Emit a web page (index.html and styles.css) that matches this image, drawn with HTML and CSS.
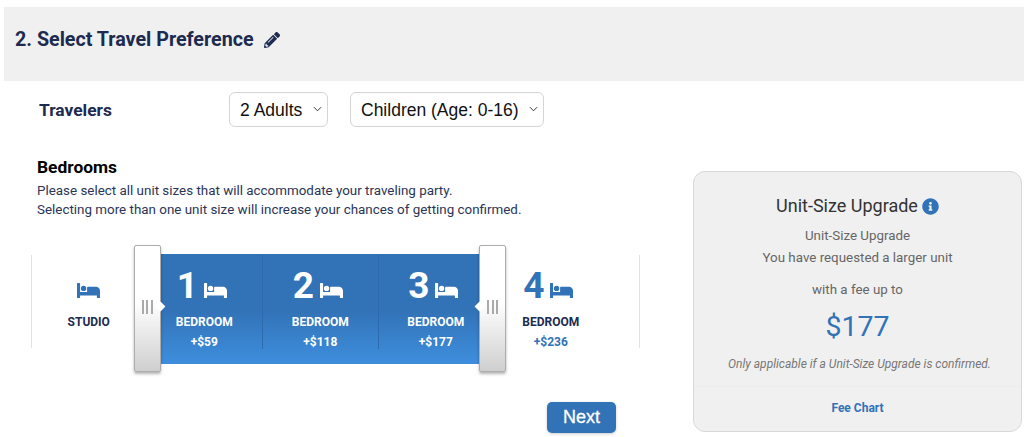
FILE: index.html
```html
<!DOCTYPE html>
<html lang="en">
<head>
<meta charset="utf-8">
<title>Select Travel Preference</title>
<link rel="stylesheet" href="styles.css">
</head>
<body>
<svg class="defs" width="0" height="0" aria-hidden="true">
  <symbol id="bed" viewBox="0 0 23 15"><path d="M.6 0h1.900c.3 0 .6.3.6.6V9h7V4.400c0-.4.3-.7.700-.7h8.200c2.200 0 4 1.800 4 4v6.700c0 .3-.3.600-.6.600h-1.900c-.3 0-.6-.3-.6-.6V12.500H3.100v1.900c0 .3-.3.600-.6.600H.6c-.3 0-.6-.3-.6-.6V.6C0 .3.300 0 .6 0zM6.600 2.700a2.700 2.700 0 1 1 0 5.400 2.700 2.700 0 0 1 0-5.400z"/></symbol>
</svg>
<header class="section-head">
  <h1>2. Select Travel Preference</h1>
  <svg class="pencil" viewBox="0 0 512 512"><path d="M497.9 142.1l-46.1 46.1c-4.7 4.7-12.3 4.7-17 0l-111-111c-4.7-4.7-4.7-12.3 0-17l46.1-46.1c18.7-18.7 49.1-18.7 67.9 0l60.1 60.1c18.8 18.7 18.8 49.1 0 67.9zM284.2 99.8L21.6 362.4.4 483.9c-2.9 16.4 11.4 30.6 27.8 27.8l121.5-21.3 262.6-262.6c4.7-4.7 4.7-12.3 0-17l-111-111c-4.8-4.7-12.4-4.7-17.1 0zM124.1 339.9c-5.5-5.5-5.5-14.3 0-19.8l154-154c5.5-5.5 14.3-5.5 19.8 0s5.5 14.3 0 19.8l-154 154c-5.5 5.5-14.3 5.5-19.8 0zM88 424h48v36.3l-64.5 11.3-31.1-31.1L51.7 376H88v48z"/></svg>
</header>
<div class="travelers">
  <div class="travelers-label">Travelers</div>
  <div class="select-wrap adults">
    <select><option>2 Adults</option></select>
    <svg class="chevron" viewBox="0 0 10 6"><path d="M1 1l4 4 4-4"/></svg>
  </div>
  <div class="select-wrap children">
    <select><option>Children (Age: 0-16)</option></select>
    <svg class="chevron" viewBox="0 0 10 6"><path d="M1 1l4 4 4-4"/></svg>
  </div>
</div>
<main class="content">
  <section class="left">
    <div class="intro">
      <h2>Bedrooms</h2>
      <p>Please select all unit sizes that will accommodate your traveling party.</p>
      <p>Selecting more than one unit size will increase your chances of getting confirmed.</p>
    </div>
    <div class="slider">
      <div class="band"></div>
      <div class="handle handle-left"><span class="grip"></span></div>
      <div class="handle handle-right"><span class="grip"></span></div>
      <div class="cell">
        <div class="top"><svg class="bed"><use href="#bed"/></svg></div>
        <div class="label">STUDIO</div>
      </div>
      <div class="cell selected">
        <div class="top"><span class="num">1</span><svg class="bed"><use href="#bed"/></svg></div>
        <div class="label">BEDROOM</div>
        <div class="price">+$59</div>
      </div>
      <div class="cell selected split">
        <div class="top"><span class="num">2</span><svg class="bed"><use href="#bed"/></svg></div>
        <div class="label">BEDROOM</div>
        <div class="price">+$118</div>
      </div>
      <div class="cell selected split">
        <div class="top"><span class="num">3</span><svg class="bed"><use href="#bed"/></svg></div>
        <div class="label">BEDROOM</div>
        <div class="price">+$177</div>
      </div>
      <div class="cell">
        <div class="top"><span class="num">4</span><svg class="bed"><use href="#bed"/></svg></div>
        <div class="label">BEDROOM</div>
        <div class="price">+$236</div>
      </div>
    </div>
    <div class="actions"><button class="next" type="button">Next</button></div>
  </section>
  <aside class="card">
    <div class="card-body">
      <h3>Unit-Size Upgrade <svg class="info" viewBox="0 0 512 512"><path d="M256 8C119.043 8 8 119.083 8 256c0 136.997 111.043 248 248 248s248-111.003 248-248C504 119.083 392.957 8 256 8zm0 110c23.196 0 42 18.804 42 42s-18.804 42-42 42-42-18.804-42-42 18.804-42 42-42zm56 254c0 6.627-5.373 12-12 12h-88c-6.627 0-12-5.373-12-12v-24c0-6.627 5.373-12 12-12h12v-64h-12c-6.627 0-12-5.373-12-12v-24c0-6.627 5.373-12 12-12h64c6.627 0 12 5.373 12 12v100h12c6.627 0 12 5.373 12 12v24z"/></svg></h3>
      <p class="line">Unit-Size Upgrade</p>
      <p class="line">You have requested a larger unit</p>
      <p class="line fee">with a fee up to</p>
      <div class="amount">$177</div>
      <p class="note">Only applicable if a Unit-Size Upgrade is confirmed.</p>
    </div>
    <div class="card-foot"><a class="chart">Fee Chart</a></div>
  </aside>
</main>
</body>
</html>
```
FILE: styles.css
```css
* { box-sizing: border-box; }
html, body { margin: 0; padding: 0; }
body { background: #fff; font-family: Roboto, "Liberation Sans", sans-serif; color: #1c2b4f; width: 1024px; height: 437px; overflow: hidden; }
.defs { display: block; height: 0; }
.section-head { margin: 7px 0 0 4px; height: 74px; background: #f0f0f0; display: flex; align-items: center; padding: 0 0 9px 11px; }
.section-head h1 { margin: 0; font-size: 19.7px; line-height: 24px; font-weight: 700; color: #1c2b4f; }
.pencil { width: 16px; height: 16px; margin-left: 10px; fill: #1c2b4f; }
.travelers { display: flex; align-items: center; margin-top: 11px; height: 35px; padding-left: 39px; }
.travelers-label { width: 190px; font-size: 17.4px; font-weight: 700; color: #1c2b4f; }
.select-wrap { position: relative; height: 35px; }
.select-wrap select { appearance: none; -webkit-appearance: none; width: 100%; height: 100%; border: 1px solid #d4d4d4; border-radius: 6px; background: #fff; padding: 0 0 0 10px; font-family: "Liberation Sans", Arial, sans-serif; font-size: 17.5px; color: #111; }
.adults { width: 99px; }
.children { width: 194px; margin-left: 22px; }
.chevron { position: absolute; right: 6px; top: 14px; width: 9px; height: 6px; fill: none; stroke: #333; stroke-width: 1.1; }
.content { display: flex; align-items: flex-start; margin-top: 31px; }
.left { width: 693px; padding-left: 31px; flex: none; }
.intro { padding-left: 6px; }
.intro h2 { margin: 0 0 4px; font-size: 17.4px; line-height: 19px; font-weight: 700; color: #000; }
.intro p { margin: 0; font-size: 13.4px; line-height: 19px; color: #2a3557; }
.slider { position: relative; width: 609px; height: 93px; margin-top: 36px; display: grid; grid-template-columns: repeat(5, 115.5px); background: linear-gradient(#e2e2e2, #e2e2e2) left top / 1px 100% no-repeat, linear-gradient(#e2e2e2, #e2e2e2) right top / 1px 100% no-repeat; }
.band { position: absolute; left: 129px; top: -1px; width: 321px; height: 110px; background: linear-gradient(#3272b6 0%, #3272b6 50%, #3e8ede 100%); }
.handle { position: absolute; top: -10px; width: 27px; height: 127px; border: 1px solid #adadad; border-radius: 2px; background: linear-gradient(#fff 0%, #fff 45%, #cfcfcf 100%); box-shadow: 0 2px 3px rgba(0,0,0,.3); z-index: 2; }
.handle::after { content: ""; position: absolute; top: 57px; width: 7px; height: 7px; background: #fff; transform: rotate(45deg); }
.handle-left { left: 103px; }
.handle-left::after { right: -4px; }
.handle-right { left: 448px; }
.handle-right::after { left: -4px; }
.grip { position: absolute; left: 7px; top: 54px; width: 11px; height: 14px; background: repeating-linear-gradient(90deg, #aaa 0, #aaa 2px, transparent 2px, transparent 4.5px); }
.cell { position: relative; display: flex; flex-direction: column; align-items: center; padding-top: 11px; }
.top { height: 40px; display: flex; align-items: center; gap: 6px; }
.num { font-size: 37px; line-height: 40px; font-weight: 700; color: #3272b6; margin-left: -5px; }
.bed { width: 23px; height: 15px; margin-top: 9px; fill: #3272b6; }
.label { margin-top: 9px; font-size: 12px; line-height: 14px; font-weight: 700; color: #1c2b4f; }
.price { margin-top: 6px; font-size: 12px; line-height: 14px; font-weight: 700; color: #3272b6; }
.selected .num, .selected .label, .selected .price { color: #fff; }
.selected .bed { fill: #fff; }
.split { border-left: 1px solid #2e6bae; }
.actions { display: flex; justify-content: flex-end; padding-right: 77px; margin-top: 54px; }
.next { width: 69px; height: 31px; border: 0; border-radius: 5px; background: #3272b6; color: #fff; font-family: "Liberation Sans", Arial, sans-serif; font-size: 18px; -webkit-text-stroke: .3px #fff; box-shadow: 0 1px 3px rgba(0,0,0,.2); }
.card { width: 329px; height: 261px; margin-top: 13px; background: #f0f0f0; border: 1px solid #d8d8d8; border-radius: 12px; display: flex; flex-direction: column; text-align: center; }
.card-body { height: 215px; padding-top: 23px; border-bottom: 1px solid #ececec; }
.card h3 { margin: 0; font-size: 18px; line-height: 22px; font-weight: 400; color: #333; display: flex; justify-content: center; align-items: center; gap: 4px; }
.info { width: 17px; height: 17px; fill: #3272b6; }
.line { margin: 0; font-size: 13.35px; line-height: 22px; color: #666; }
.card h3 + .line { margin-top: 8px; }
.fee { margin-top: 10px; }
.amount { font-size: 28.5px; line-height: 34px; color: #3272b6; margin-top: 9px; }
.note { margin: 12px 0 0; padding-left: 4px; font-size: 12px; line-height: 16px; font-style: italic; color: #777; }
.card-foot { padding-top: 10px; }
.chart { font-size: 12px; line-height: 16px; font-weight: 700; color: #3272b6; }
```
